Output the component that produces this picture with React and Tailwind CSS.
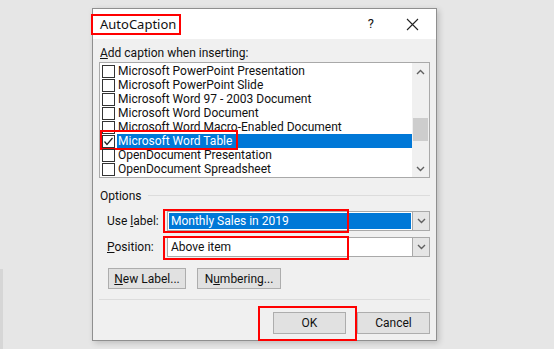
export default function App() {
  const items = [
    "Microsoft PowerPoint Presentation",
    "Microsoft PowerPoint Slide",
    "Microsoft Word 97 - 2003 Document",
    "Microsoft Word Document",
    "Microsoft Word Macro-Enabled Document",
    "Microsoft Word Table",
    "OpenDocument Presentation",
    "OpenDocument Spreadsheet",
  ];
  const selected = 5;

  const Chevron = ({ up }) => (
    <svg width="9" height="6" viewBox="0 0 9 6" className="block">
      <polyline
        points={up ? "1,5 4.5,1.5 8,5" : "1,1 4.5,4.5 8,1"}
        fill="none"
        stroke="#606060"
        strokeWidth="1.4"
      />
    </svg>
  );

  return (
    <div className="relative w-[554px] h-[349px] overflow-hidden bg-[#e6e6e6] font-['Roboto',sans-serif] text-[12px] leading-[14px] text-[#111]">
      {/* sliver of the document on the left */}
      <div className="absolute left-0 top-[269px] w-[3px] h-[80px] bg-[#d6d6d6]" />

      {/* ---------- DIALOG ---------- */}
      <div className="ml-[92px] mt-[8px] w-[345px] h-[333px] border border-[#8f8f8f] bg-[#f0f0f0] shadow-[2px_2px_6px_rgba(0,0,0,0.18)] flex flex-col">
        {/* title bar */}
        <div className="relative h-[30px] bg-white flex items-center pl-[7px] pr-[17px] shrink-0">
          <span className="text-[13px] font-['Noto_Sans',sans-serif]">AutoCaption</span>
          <div className="absolute left-[-2px] top-[5px] w-[90px] h-[21px] border-2 border-[#ff0000]" />
          <span className="ml-auto text-[13px] mr-[32px]">?</span>
          <svg width="13" height="13" viewBox="0 0 13 13">
            <path d="M1 1 L12 12 M12 1 L1 12" stroke="#222" strokeWidth="1.1" />
          </svg>
        </div>

        <div className="flex flex-col px-[6px]">
          <div className="mt-[7px] h-[15px] pl-[1px]">
            <u>A</u>dd caption when inserting:
          </div>

          {/* list box */}
          <div className="mt-[1px] h-[116px] border border-[#a9a9a9] bg-white flex">
            <div className="flex-1 pt-[1px]">
              {items.map((t, i) => (
                <div key={t} className="relative h-[14px] flex items-center">
                  <div className="ml-[2px] w-[13px] h-[13px] border border-[#333] bg-white flex items-center justify-center shrink-0">
                    {i === selected && (
                      <svg width="11" height="11" viewBox="0 0 11 11">
                        <polyline points="1.5,5.5 4,8.5 9.5,2" fill="none" stroke="#222" strokeWidth="1.2" />
                      </svg>
                    )}
                  </div>
                  <div
                    className={
                      i === selected
                        ? "ml-[2px] flex-1 h-[14px] bg-[#0078d7] text-white pl-[1px] flex items-center whitespace-nowrap"
                        : "ml-[2px] flex-1 h-[14px] pl-[1px] flex items-center whitespace-nowrap"
                    }
                  >
                    {t}
                  </div>
                  {i === selected && (
                    <div className="absolute left-0 top-[-4px] w-[138px] h-[20px] border-2 border-[#ff0000]" />
                  )}
                </div>
              ))}
            </div>
            {/* scrollbar */}
            <div className="w-[17px] bg-[#f0f0f0] flex flex-col items-center">
              <div className="h-[17px] flex items-center justify-center">
                <Chevron up />
              </div>
              <div className="flex-1 w-full px-[1px]">
                <div className="mt-[38px] h-[23px] bg-[#cdcdcd]" />
              </div>
              <div className="h-[17px] flex items-center justify-center">
                <Chevron />
              </div>
            </div>
          </div>

          {/* options */}
          <div className="mt-[10px] flex items-center h-[15px] pl-[1px]">
            <span>Options</span>
            <div className="ml-[6px] flex-1 h-px bg-[#dcdcdc]" />
          </div>

          <div className="mt-[8px] flex items-center pl-[8px]">
            <span className="w-[60px]">
              Use <u>l</u>abel:
            </span>
            <div className="relative flex-1 h-[20px] border border-[#a9a9a9] bg-white flex">
              <div className="flex-1 m-[1px] bg-[#0078d7] text-white pl-[2px] flex items-center">
                Monthly Sales in 2019
              </div>
              <div className="w-[17px] bg-[#e5e5e5] border-l border-[#a9a9a9] flex items-center justify-center">
                <Chevron />
              </div>
              <div className="absolute left-[-5px] top-[-3px] w-[186px] h-[24px] border-2 border-[#ff0000]" />
            </div>
          </div>

          <div className="mt-[6px] flex items-center pl-[8px]">
            <span className="w-[60px]">
              <u>P</u>osition:
            </span>
            <div className="relative flex-1 h-[20px] border border-[#a9a9a9] bg-white flex">
              <div className="flex-1 pl-[3px] flex items-center">Above item</div>
              <div className="w-[17px] bg-[#e5e5e5] border-l border-[#a9a9a9] flex items-center justify-center">
                <Chevron />
              </div>
              <div className="absolute left-[-5px] top-[-2px] w-[186px] h-[24px] border-2 border-[#ff0000]" />
            </div>
          </div>

          {/* new label / numbering */}
          <div className="mt-[11px] flex pl-[9px] gap-[11px]">
            <div className="w-[78px] h-[21px] border border-[#adadad] bg-[#e1e1e1] flex items-center justify-center">
              <span>
                <u>N</u>ew Label...
              </span>
            </div>
            <div className="w-[84px] h-[21px] border border-[#adadad] bg-[#e1e1e1] flex items-center justify-center">
              <span>
                N<u>u</u>mbering...
              </span>
            </div>
          </div>

          <div className="mt-[10px] h-px bg-[#dcdcdc]" />

          {/* ok / cancel */}
          <div className="mt-[12px] flex justify-end gap-[11px]">
            <div className="relative w-[73px] h-[22px] border border-[#adadad] bg-[#e1e1e1] flex items-center justify-center">
              OK
              <div className="absolute left-[-16px] top-[-7px] w-[99px] h-[35px] border-2 border-[#ff0000]" />
            </div>
            <div className="w-[73px] h-[22px] border border-[#adadad] bg-[#e1e1e1] flex items-center justify-center">
              Cancel
            </div>
          </div>
        </div>
      </div>
    </div>
  );
}
